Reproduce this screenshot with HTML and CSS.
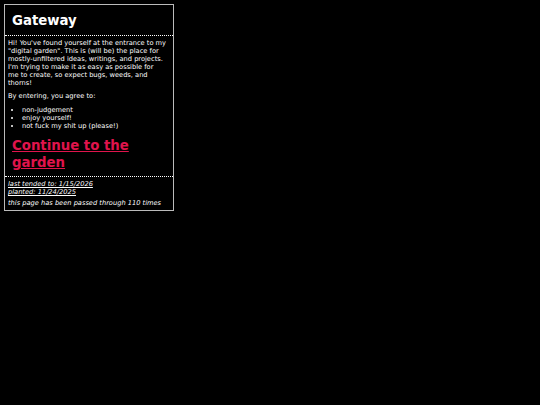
FILE: index.html
```html
<!DOCTYPE html>
<html>
<head>
<meta charset="utf-8">
<link rel="stylesheet" href="styles.css">
<title>Gateway</title>
</head>
<body>
<div class="gateway">
  <div class="header"><h1>Gateway</h1></div>
  <div class="content">
    <p>Hi! You've found yourself at the entrance to my "digital garden". This is (will be) the place for mostly-unfiltered ideas, writings, and projects. I'm trying to make it as easy as possible for me&nbsp;to create, so expect bugs, weeds, and thorns!</p>
    <p>By entering, you agree to:</p>
    <ul>
      <li>non-judgement</li>
      <li>enjoy yourself!</li>
      <li>not fuck my shit up (please!)</li>
    </ul>
    <a class="enter" href="#">Continue to the garden</a>
  </div>
  <div class="footer">
    <p class="dates"><span class="u">last tended to: 1/15/2026</span><br><span class="u">planted: 11/24/2025</span></p>
    <p class="count">this page has been passed through 110 times</p>
  </div>
</div>
</body>
</html>
```
FILE: styles.css
```css
html, body {
  background: #000;
}
body {
  margin: 0;
  padding: 4px;
  color: #fff;
  font-family: "DejaVu Sans", Verdana, sans-serif;
  font-size: 6.67px;
  line-height: 8px;
}
.gateway {
  width: 168px;
  border: 1px solid #bbb;
}
.header {
  border-bottom: 1px dotted #fff;
  padding: 7px 7px 6px;
}
.header h1 {
  margin: 0;
  font-size: 13.3px;
  line-height: 17px;
  font-weight: bold;
}
.content {
  padding: 3px 3px 5px;
}
.content p {
  margin: 0 0 5px;
}
.content ul {
  margin: 6px 0 4px;
  padding-left: 14px;
}
.enter {
  display: block;
  color: #e0144c;
  font-weight: bold;
  font-size: 13.3px;
  line-height: 17px;
  padding: 3px 4px 0;
  text-decoration: underline;
}
.footer {
  border-top: 1px dotted #fff;
  padding: 3px 3px 3px;
  font-style: italic;
}
.footer p {
  margin: 0;
}
.footer .dates {
  margin-bottom: 3px;
}
.u {
  text-decoration: underline;
}
```
